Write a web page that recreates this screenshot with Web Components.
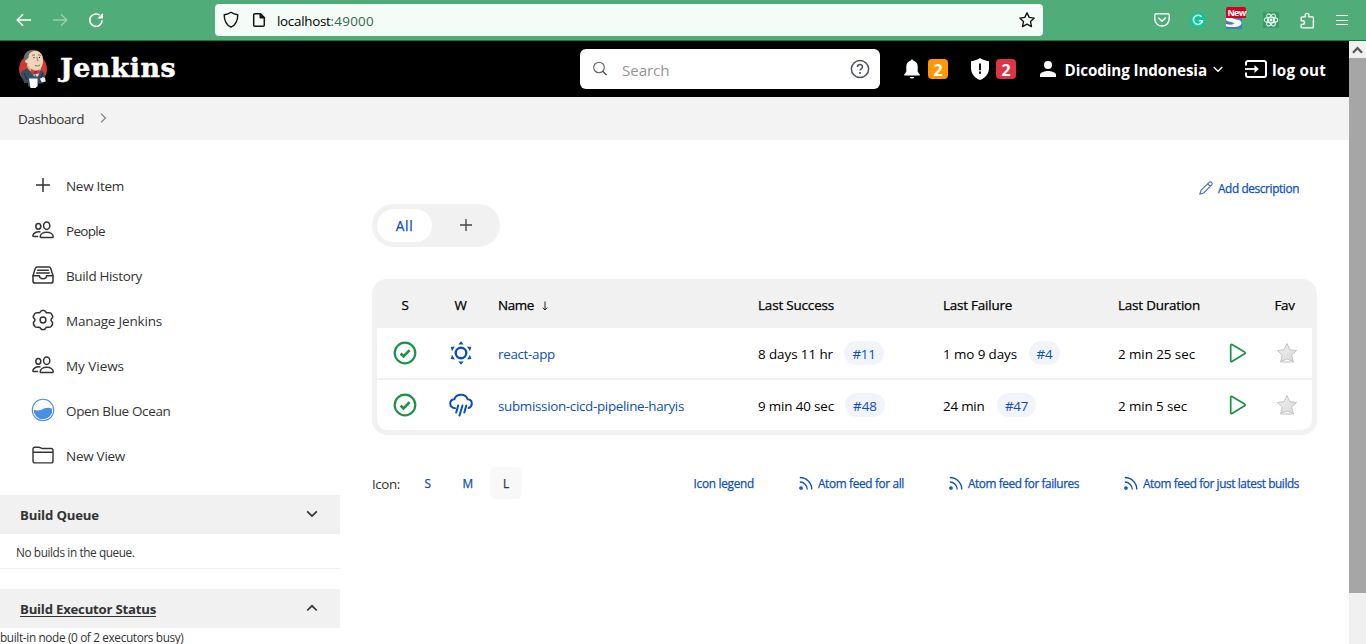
<!DOCTYPE html>
<html lang="en">
<head>
<meta charset="utf-8">
<title>Dashboard [Jenkins]</title>
<style>
html,body{margin:0;height:100%;overflow:hidden;background:#fff;font-family:"Open Sans","Noto Sans",sans-serif;color:#333}
</style>
</head>
<body>
<jenkins-window></jenkins-window>
<script>
const define = (name, html) => customElements.define(name, class extends HTMLElement {
  constructor() {
    super();
    const t = document.createElement('template');
    t.innerHTML = html;
    this.attachShadow({mode: 'open'}).append(t.content.cloneNode(true));
  }
});

/* name: [width, height, svg body]; the viewBox equals the drawn size */
const ICONS = {
  back: [16,14,'<path d="M15 7H1.5M7 1.2 1.2 7 7 12.8" fill="none" stroke="#fff" stroke-width="1.5"/>'],
  forward: [16,14,'<path d="M1 7h13.5M9 1.2 14.8 7 9 12.8" fill="none" stroke="#9bd0b3" stroke-width="1.3"/>'],
  reload: [16,16,'<path d="M14.1 8.2A6.2 6.2 0 1 1 11.6 3.2" fill="none" stroke="#fff" stroke-width="1.6"/><path d="M14.9 1v5.6H9.3z" fill="#fff"/>'],
  shield: [16,18,'<path d="M8 1.3C6 2.8 3.8 3.5 1.2 3.8c0 5.600 1.700 10 6.800 12.400 5.100-2.400 6.800-6.800 6.800-12.400C12.200 3.500 10 2.800 8 1.300z" fill="none" stroke="#15141a" stroke-width="1.4" stroke-linejoin="round"/>'],
  page: [14,16,'<path d="M3 1.700h5.500l3.800 3.800V13a1.300 1.300 0 0 1-1.300 1.300H3A1.300 1.300 0 0 1 1.700 13V3A1.300 1.300 0 0 1 3 1.700z" fill="none" stroke="#15141a" stroke-width="1.500"/><path d="M8 1.500V6h4.500z" fill="#15141a" stroke="#15141a"/>'],
  bookmark: [18,18,'<path d="m9 1.800 2.200 4.600 5 .7-3.650 3.500.9 5L9 13.200l-4.450 2.400.9-5L1.800 7.100l5-.7z" fill="none" stroke="#15141a" stroke-width="1.400" stroke-linejoin="round"/>'],
  pocket: [16,14,'<path d="M2.300.8h11.400c.8 0 1.500.6 1.500 1.500V6a7.200 7 0 0 1-14.400 0V2.300C.8 1.400 1.500.8 2.300.8z" fill="none" stroke="#fff" stroke-width="1.400"/><path d="m4.700 5 3.300 3.200L11.300 5" fill="none" stroke="#fff" stroke-width="1.500" stroke-linecap="round"/>'],
  grammarly: [16,16,'<circle cx="8" cy="8" r="7.800" fill="#15c39a"/><path d="M11.500 4.800A4.600 4.600 0 1 0 12.500 8.700H9" fill="none" stroke="#d9fff3" stroke-width="1.500"/><path d="m10.800 8.500 2.400-.2-.5 3z" fill="#d9fff3"/>'],
  swoosh: [16,11,'<path fill="#3d7fc1" d="M0 0h16v11H0z"/><path d="M0 0h6c2 2 9 1 9.500 4.500C15.500 8.500 10 10 0 8.500V6c4 1 8 .8 8-.5S2 4 0 2z" fill="#fff"/>'],
  react: [16,16,'<path fill="#3f976a" d="M0 0h16v16H0z"/><g fill="none" stroke="#e7fff2" stroke-width="1.100"><ellipse cx="8" cy="8" rx="6.800" ry="2.700"/><ellipse cx="8" cy="8" rx="6.800" ry="2.700" transform="rotate(60 8 8)"/><ellipse cx="8" cy="8" rx="6.800" ry="2.700" transform="rotate(120 8 8)"/></g><circle cx="8" cy="8" r="1.400" fill="#fff"/>'],
  puzzle: [16,17,'<path d="M2.200 6.300V5.900c0-.6.400-1 1-1h3V3.200a1.800 1.800 0 0 1 3.700 0v1.700h3.500c.6 0 1 .4 1 1v9c0 .6-.4 1-1 1H3.200c-.6 0-1-.4-1-1v-2.500h1.500a1.800 1.800 0 0 0 0-3.700H2.200z" fill="none" stroke="#fff" stroke-width="1.400" stroke-linejoin="round"/>'],
  menu: [14,12,'<path d="M1 1.500h12M1 6.500h12M1 10.500h12" stroke="#fff" stroke-width="1.200"/>'],
  jenkins: [30,40,'<ellipse cx="15" cy="20" rx="14" ry="14.500" fill="#d33833"/><path d="M2.500 25C4 21 8 20 11 19l10 2c4 0 6 3 5.500 7L26 33c-3 4-7 5-11 5-5 0-8-2-9.500-6z" fill="#335061"/><path d="M9 16c0 4 3 7 8 8 3 0 5-1 6-4l-1-6z" fill="#d6b58d"/><path d="M7 9C7 3 11 1 16 1.500c6 0 9 4 9 9 .5 6-2 10-6 10.500-6 1-11-5-12-12z" fill="#f0d6b7"/><path d="M6.800 13C4 7 8 1.500 13 1c2-.5 5-.5 7 .5-4 .3-7 1-8.500 3-1.300 1.600-.4 3.300-1.500 5-.8.500-1.500.5-1.700 1.500z" fill="#6d6b6d"/><path d="M8 10.500c-2 0-2 4 1.500 4" fill="#f0d6b7" stroke="#4d3a2b" stroke-width=".6"/><path d="M14 6.500c1-.8 2-.8 3 0M20 6.300c1-.6 2-.5 3 .2M19 8c-.5 2 2 3 .4 4.200M17 16.500c1.800.8 3.600.5 5-.4" stroke="#5d5148" stroke-width=".8" fill="none"/><circle cx="16" cy="8.600" r=".6"/><circle cx="21.500" cy="8.300" r=".6"/><path d="m13 19.800 4 2.200 4.500-1.200.5 4.500-4.500-1-4 1.400z" fill="#d33833"/><circle cx="17.600" cy="23" r="1.200" fill="#a01e1e"/><path d="m15 25.500 6-1-1 3h-4z" fill="#ddd"/><path d="M17.200 25.500v3" stroke="#335061" stroke-width="1.200"/><path d="M11 29.500h8.500v7.500l-2 2h-5z" fill="#fff"/><path d="M22 30c1-2 4-2.500 5-1l.8 3.500-4 .8z" fill="#eee"/><path d="M20 34.500h8V40h-8zM0 34h10v6H4z" fill="#000"/><path d="m6 24 3 7M25 24l-2 5" stroke="#1d2f3b" fill="none"/>'],
  search: [16,16,'<circle cx="7" cy="6.500" r="5.300" fill="none" stroke="#5b5f63" stroke-width="1.100"/><path d="m10.900 10.400 3.600 3.600" stroke="#333" stroke-width="1.100"/>'],
  help: [20,20,'<circle cx="10" cy="10" r="8.600" fill="none" stroke="#4d545d" stroke-width="1.500"/><path d="M7.500 8.100C7.500 4.800 12.500 4.800 12.500 7.900c0 1.800-2.500 2-2.500 3.600" fill="none" stroke="#4d545d" stroke-width="1.500"/><circle cx="10" cy="14" r="1.050" fill="#4d545d"/>'],
  bell: [16,20,'<path d="M8 .5c.8 0 1.300.5 1.400 1.200 2.800.6 4.300 2.800 4.300 5.800v5.300l1.900 2.500c.5.800.2 1.200-.5 1.200H.9c-.7 0-1-.4-.5-1.200l1.900-2.500V7.500c0-3 1.500-5.200 4.300-5.800C6.700 1 7.200.5 8 .5zM5.800 18h4.400a2.200 1.600 0 0 1-4.400 0z" fill="#fff"/>'],
  guard: [18,22,'<path d="M9 0c2.500 1.700 5.500 2.700 9 3.200V10c0 5.500-3.500 10-9 12-5.500-2-9-6.500-9-12V3.200C3.500 2.700 6.500 1.700 9 0z" fill="#fff"/><path d="M9 5.500v6.700M9 13.500v2.200" stroke="#111" stroke-width="2"/>'],
  user: [16,16,'<circle cx="8" cy="4" r="4" fill="#fff"/><path d="M0 16v-2c0-3 5.300-4 8-4s8 1 8 4v2z" fill="#fff"/>'],
  chevWhite: [10,7,'<path d="m.7 1 4.300 4.300L9.300 1" fill="none" stroke="#fff" stroke-width="1.300"/>'],
  logout: [22,18,'<path d="M1 5.500V3c0-1.200.8-2 2-2h16c1.200 0 2 .8 2 2v12c0 1.200-.8 2-2 2H3c-1.200 0-2-.8-2-2v-2.500" fill="none" stroke="#fff" stroke-width="2"/><path d="M0 9h11" stroke="#fff" stroke-width="1.800"/><path d="M9.500 5 13.800 9 9.500 13z" fill="#fff"/>'],
  crumb: [7,10,'<path d="m1.200.8 4.300 4.200-4.300 4.200" fill="none" stroke="#888" stroke-width="1.300"/>'],
  plus: [16,16,'<path d="M8 1v14M1 8h14" stroke="#333" stroke-width="1.500"/>'],
  people: [22,18,'<g fill="none" stroke="#333" stroke-width="1.500" stroke-linejoin="round"><ellipse cx="14.700" cy="4.700" rx="3.100" ry="3.700"/><ellipse cx="6.300" cy="5.300" rx="2.500" ry="2.900"/><path d="M8.200 15.800c0-2.600 2.800-4.600 6.500-4.600s6.500 2 6.500 4.600c0 .5-.3.800-.8.800H9c-.5 0-.8-.3-.8-.800zM8.500 10.900C5 10.200 1 11.800.8 14.700c0 .4.300.7.700.7h4.700"/></g>'],
  history: [22,18,'<g fill="none" stroke="#333" stroke-width="1.500" stroke-linejoin="round"><path d="M1 9.700 3.200 2.600C3.500 1.500 4.300 1 5.300 1h11.400c1 0 1.800.5 2.100 1.600L21 9.700v5.200c0 1.300-.9 2.100-2.100 2.100H3.100C1.900 17 1 16.200 1 14.900z"/><path d="M1 9.700h6.500c0 1.800 1.500 3 3.500 3s3.500-1.200 3.500-3H21M4.700 7h12.600M5.700 4.300h10.600" stroke-linecap="round"/></g>'],
  gear: [22,22,'<path d="M11 1.200C13 1.200 13.500 2.300 14.100 3.500 15.400 4.300 17.500 3 18.900 4.200 20.200 5.800 21 7.300 20.600 8.600 19.800 9.500 19 10.200 19 11s.8 1.500 1.600 2.400c.4 1.300-.4 2.800-1.700 4.400-1.400 1.200-3.500-.1-4.800.7-.6 1.200-1.100 2.300-3.100 2.300s-2.500-1.100-3.100-2.300c-1.300-.8-3.400.5-4.800-.7C1.800 16.200 1 14.700 1.400 13.400 2.200 12.500 3 11.800 3 11s-.8-1.500-1.600-2.400C1 7.300 1.800 5.800 3.100 4.200c1.400-1.200 3.500.1 4.800-.7C8.500 2.300 9 1.200 11 1.200z" fill="none" stroke="#333" stroke-width="1.500"/><circle cx="11" cy="11" r="2.900" fill="none" stroke="#333" stroke-width="1.500"/>'],
  ocean: [24,24,'<circle cx="12" cy="12" r="10.700" fill="#fff" stroke="#4a90e2" stroke-width="1.100"/><path d="M2.700 11.500C5 12.600 7.500 13 10.500 11.700 13.500 10.400 16 8.700 21.200 10.800A9.300 9.300 0 1 1 2.700 11.500z" fill="#4a90e2"/>'],
  folder: [22,18,'<g fill="none" stroke="#333" stroke-width="1.400"><path d="M1 15V3c0-1.200.7-1.800 1.800-1.800h4c1.600 0 2.200 1.300 3.700 1.300h8.700c1.200 0 1.800.7 1.800 1.800V15c0 1.200-.7 1.900-1.800 1.900H2.800C1.700 16.900 1 16.200 1 15zM1 6.300h20"/></g>'],
  down: [12,8,'<path d="m1.200 1.300 4.800 4.700 4.800-4.700" fill="none" stroke="#333" stroke-width="1.700"/>'],
  up: [12,8,'<path d="M1.200 6.500 6 1.800l4.800 4.700" fill="none" stroke="#333" stroke-width="1.700"/>'],
  pencil: [14,14,'<path d="M.8 13.200 2 9.300l7.800-7.700c1-1 2-.9 2.800-.2.800.8.8 1.900-.2 2.800L4.700 12z M8.700 2.700l2.600 2.600" fill="none" stroke="#3d6fc4" stroke-width="1.100" stroke-linejoin="round"/>'],
  tabplus: [14,14,'<path d="M7 1v12M1 7h12" stroke="#444" stroke-width="1.300"/>'],
  ok: [24,24,'<circle cx="12" cy="12" r="10.300" fill="none" stroke="#1e9147" stroke-width="2.200"/><path d="m7.600 12.500 3 2.900 6-6.300" fill="none" stroke="#1e9147" stroke-width="2.700"/>'],
  sun: [24,24,'<circle cx="12" cy="12" r="5.300" fill="none" stroke="#0b4fba" stroke-width="2.400"/><path d="m12 .3 2.700 3.300H9.300zM12 23.700l2.700-3.300H9.300zM22.300 6.100l-1.300 4.100-2.900-4.700zM1.700 6.100 3 10.200l2.900-4.700zM22.300 17.900 21 13.800l-2.900 4.700zM1.700 17.900 3 13.800l2.900 4.700z" fill="#0b4fba"/>'],
  rain: [24,24,'<path d="M6 15.300C2.800 14.700 1.200 12.800 1.200 10.600c0-2.600 1.900-4.300 4.200-4.400C6.300 3.500 8.800 1.800 12 1.800s5.700 1.700 6.600 4.400c2.300.1 4.200 1.800 4.200 4.400 0 2.200-1.300 3.900-3.300 4.400" fill="none" stroke="#0b4fba" stroke-width="2" stroke-linecap="round"/><path d="M9.200 12.500 7.200 19.500M13.500 12.500l-3 10M17.300 12.500 15.300 19.500" stroke="#0b4fba" stroke-width="2" stroke-linecap="round"/>'],
  play: [18,20,'<path d="M1.700 2.300c0-.8.600-1.200 1.300-.8l12.600 7.600c.7.400.7 1.200 0 1.600L3 18.500c-.7.400-1.300 0-1.300-.8z" fill="none" stroke="#1e9147" stroke-width="1.700"/>'],
  star: [22,22,'<defs><linearGradient id="g" x2="1" y2="1"><stop stop-color="#f2f2f2"/><stop offset="1" stop-color="#d8d8d8"/></linearGradient></defs><ellipse cx="11" cy="20" rx="7.500" ry="1" fill="#ddd"/><path d="m11 1.500 2.900 6.200 6.700.8-5 4.500 1.800 6.600-6.400-2.600-6.400 2.600L6.400 13l-5-4.500 6.700-.8z" fill="url(#g)" stroke="#b8b8b8" stroke-width=".8"/>'],
  feed: [14,14,'<g fill="none" stroke="#0b4fba" stroke-width="1.300"><path d="M.8 1.500A12 12 0 0 1 12.800 13.500M.8 6A7.500 7.500 0 0 1 8.300 13.500"/><circle cx="2" cy="12" r="1.200" fill="#5a87d0"/></g>'],
  sorted: [8,10,'<path d="M4 .5v8M1.800 6.700 4 9l2.200-2.300" fill="none" stroke="#222" stroke-width="1"/>'],
  scrollup: [11,8,'<path d="M1 6.800 5.500 2 10 6.800" fill="none" stroke="#555" stroke-width="2.200"/>']
};
customElements.define('ui-icon', class extends HTMLElement {
  connectedCallback() {
    if (this.shadowRoot) return;
    const [w, h, body] = ICONS[this.getAttribute('name')];
    this.attachShadow({mode: 'open'}).innerHTML =
      `<style>:host{display:block;flex:none;width:${w}px;height:${h}px}svg{display:block}</style>
       <svg width="${w}" height="${h}" viewBox="0 0 ${w} ${h}">${body}</svg>`;
  }
});

define('browser-bar', `
<style>
:host{display:flex;align-items:center;height:40px;background:#50ad7a;border-bottom:1px solid #0e7b41;padding:0 16px 0 16px;box-sizing:content-box}
nav{display:flex;align-items:center;gap:20px;width:199px}
.url{display:flex;align-items:center;width:828px;height:32px;padding:0 7px 0 8px;border-radius:4px;background:#f3fcf7;margin-right:111px;box-sizing:border-box}
.url ui-text{margin:2px 0 0 11px;color:#000;flex:none}
.url .port{color:#34684b;margin-left:0}
.url .page{margin-left:13px}
.url .mark{margin-left:auto}
.tools{display:flex;align-items:center;justify-content:space-between;width:195px}
.ext{display:flex;flex-direction:column;width:20px;height:22px;margin:-4px 0 0 0}
.new{width:20px;height:11px;border-radius:2px 2px 0 0;background:#d70022;color:#fff}
.new ui-text{margin-left:1px}
</style>
<nav><ui-icon name="back"></ui-icon><ui-icon name="forward"></ui-icon><ui-icon name="reload"></ui-icon></nav>
<div class="url"><ui-icon name="shield"></ui-icon><ui-icon name="page" class="page"></ui-icon><ui-text s="13.4" w="53.500">localhost</ui-text><ui-text class="port" s="13.4" w="43.500">:49000</ui-text><ui-icon name="bookmark" class="mark"></ui-icon></div>
<div class="tools"><ui-icon name="pocket"></ui-icon><ui-icon name="grammarly"></ui-icon>
<div class="ext"><div class="new"><ui-text s="9" w="18.500" h="11" b>New</ui-text></div><ui-icon name="swoosh"></ui-icon></div>
<ui-icon name="react" style="margin-left:-4px"></ui-icon><ui-icon name="puzzle"></ui-icon><ui-icon name="menu"></ui-icon></div>`);

define('count-badge', `
<style>:host{display:flex;flex:none;align-items:center;justify-content:center;box-sizing:border-box;width:20px;height:20px;border-radius:4px;color:#fff;font:700 16px/20px "Open Sans",sans-serif;padding-top:2px}</style><slot></slot>`);

define('site-header', `
<style>
:host{display:flex;align-items:center;height:56px;background:#000;color:#fff;padding:0 0 0 18px}
.brand{display:flex;flex:none;align-items:center;width:562px;gap:12px}
.brand ui-text{font-family:"DejaVu Serif",serif;margin-top:-3px;-webkit-text-stroke:.5px #fff}
.search{display:flex;flex:none;align-items:center;box-sizing:border-box;width:300px;height:40px;border-radius:6px;background:#fff;color:#959595;padding:0 10px 0 12px}
.search ui-text{margin:2px auto 0 14px}
count-badge{margin-left:8px}
.bell{margin-left:24px}.guard{margin-left:23px}.user{margin-left:24px}
.name{margin:2px 6px 0 8.500px}.out{margin:2px 0 0 5px}.logout{margin-left:22px}
</style>
<div class="brand"><ui-icon name="jenkins"></ui-icon><ui-text s="26.800" w="116" b h="36">Jenkins</ui-text></div>
<div class="search"><ui-icon name="search"></ui-icon><ui-text s="15.200" w="47.500" h="22">Search</ui-text><ui-icon name="help"></ui-icon></div>
<ui-icon class="bell" name="bell"></ui-icon><count-badge style="background:#ff9800">2</count-badge>
<ui-icon class="guard" name="guard"></ui-icon><count-badge style="background:#dc3545;margin-left:7px">2</count-badge>
<ui-icon class="user" name="user"></ui-icon><ui-text class="name" s="15.200" w="142.500" b h="22">Dicoding Indonesia</ui-text><ui-icon name="chevWhite"></ui-icon>
<ui-icon class="logout" name="logout"></ui-icon><ui-text class="out" s="15.200" w="54" b h="22">log out</ui-text>`);

define('crumb-bar', `
<style>:host{display:flex;align-items:center;gap:16px;height:43px;background:#f3f3f3;padding-left:18px}
ui-icon{margin-top:-2px}</style>
<ui-text s="13.500" w="66">Dashboard</ui-text><ui-icon name="crumb"></ui-icon>`);

customElements.define('side-task', class extends HTMLElement {
  connectedCallback() {
    if (this.shadowRoot) return;
    this.attachShadow({mode: 'open'}).innerHTML = `
<style>:host{display:grid;grid-template-columns:24px auto;column-gap:11px;align-items:center;height:45px;padding-left:31px}
ui-icon{justify-self:center}ui-text{margin-top:2px;justify-self:start}</style>
<ui-icon name="${this.getAttribute('icon')}"></ui-icon><ui-text s="13.500" w="${this.getAttribute('w')}">${this.textContent}</ui-text>`;
  }
});

define('side-pane', `
<style>
:host{display:block;width:340px}
header{display:flex;align-items:center;justify-content:space-between;height:39px;background:#f1f1f1;padding:0 22px 0 20px}
::slotted(ui-icon){margin-top:-2px}
</style>
<header><slot name="title"></slot><slot name="toggle"></slot></header><slot></slot>`);

define('side-panel', `
<style>
:host{display:block;width:340px;flex:none;padding-top:22px}
.tasks{margin-bottom:18px}
.empty{height:34px;border-bottom:1px solid #f0f0f0;padding-left:16px;display:flex;align-items:center;margin-bottom:20px}
.empty ui-text{margin-top:1px}
.node{height:18px}
</style>
<div class="tasks">
<side-task icon="plus" w="58">New Item</side-task>
<side-task icon="people" w="39">People</side-task>
<side-task icon="history" w="76">Build History</side-task>
<side-task icon="gear" w="96">Manage Jenkins</side-task>
<side-task icon="people" w="58">My Views</side-task>
<side-task icon="ocean" w="104.500">Open Blue Ocean</side-task>
<side-task icon="folder" w="59">New View</side-task>
</div>
<side-pane><ui-text slot="title" s="13.200" w="79" b>Build Queue</ui-text><ui-icon slot="toggle" name="down"></ui-icon>
<div class="empty"><ui-text s="11.800" w="118.500">No builds in the queue.</ui-text></div></side-pane>
<side-pane><ui-text slot="title" s="13.200" w="136" b u>Build Executor Status</ui-text><ui-icon slot="toggle" name="up"></ui-icon>
<div class="node"><ui-text s="11.800" w="183.500" h="18">built-in node (0 of 2 executors busy)</ui-text></div></side-pane>`);

define('view-tabs', `
<style>:host{display:flex;align-items:center;box-sizing:border-box;width:128px;height:43px;border-radius:22px;background:#f1f1f1;padding:5px}
.on{display:flex;align-items:center;justify-content:center;width:55px;height:33px;border-radius:17px;background:#fff;color:#0b4fba}
.on ui-text{margin-top:1px}
.add{margin-left:27px;margin-top:-1px}</style>
<div class="on"><ui-text s="13.800" w="17.500" m>All</ui-text></div><ui-icon class="add" name="tabplus"></ui-icon>`);

define('build-link', `
<style>:host{display:flex;align-items:center;justify-content:center;height:24px;border-radius:12px;background:#f1f5fb;color:#0b4fba}</style><slot></slot>`);

define('job-table', `
<style>
:host{display:block;box-sizing:border-box;width:945px;height:156px;border:5px solid #f1f1f1;border-radius:15px;background:#fff;color:#000}
.r{display:grid;grid-template-columns:56px 56px 260px 185px 175px 111px 36px 56px;align-items:center;height:50px}
.h{height:44px;background:#f1f1f1}
.r+.r+.r{border-top:2px solid #f1f1f1}
.c{display:flex;align-items:center;padding-left:9px}
.m{display:flex;justify-content:center}
.c ui-text,.m ui-text{margin-top:2px}
.h .c ui-text,.h .m ui-text{margin:0 0 2px}.h .m ui-text{margin-left:1px}.h ui-icon{margin:0 0 0 7px}
.l{color:#0b4fba}
</style>
<div class="r h"><div class="m"><ui-text s="13.400" w="8" m>S</ui-text></div><div class="m"><ui-text s="13.400" w="14" m>W</ui-text></div>
<div class="c"><ui-text s="13.400" w="36" m>Name</ui-text><ui-icon name="sorted"></ui-icon></div>
<div class="c"><ui-text s="13.400" w="76" m>Last Success</ui-text></div><div class="c"><ui-text s="13.400" w="69" m>Last Failure</ui-text></div>
<div class="c"><ui-text s="13.400" w="82" m>Last Duration</ui-text></div><div></div><div class="m"><ui-text s="13.400" w="20" m>Fav</ui-text></div></div>
<div class="r"><div class="m"><ui-icon name="ok"></ui-icon></div><div class="m"><ui-icon name="sun"></ui-icon></div>
<div class="c l"><ui-text s="13.400" w="57">react-app</ui-text></div>
<div class="c"><ui-text s="13.400" w="75">8 days 11 hr</ui-text><build-link style="width:40px;margin-left:11px"><ui-text s="13.400" w="23">#11</ui-text></build-link></div>
<div class="c"><ui-text s="13.400" w="74">1 mo 9 days</ui-text><build-link style="width:31px;margin-left:12px"><ui-text s="13.400" w="16">#4</ui-text></build-link></div>
<div class="c"><ui-text s="13.400" w="77">2 min 25 sec</ui-text></div><div class="m"><ui-icon name="play"></ui-icon></div><div class="m"><ui-icon name="star" style="margin-left:5px"></ui-icon></div></div>
<div class="r"><div class="m"><ui-icon name="ok"></ui-icon></div><div class="m"><ui-icon name="rain"></ui-icon></div>
<div class="c l"><ui-text s="13.400" w="186">submission-cicd-pipeline-haryis</ui-text></div>
<div class="c"><ui-text s="13.400" w="76">9 min 40 sec</ui-text><build-link style="width:40px;margin-left:11px"><ui-text s="13.400" w="24">#48</ui-text></build-link></div>
<div class="c"><ui-text s="13.400" w="41.500">24 min</ui-text><build-link style="width:39px;margin-left:12.500px"><ui-text s="13.400" w="23">#47</ui-text></build-link></div>
<div class="c"><ui-text s="13.400" w="69">2 min 5 sec</ui-text></div><div class="m"><ui-icon name="play"></ui-icon></div><div class="m"><ui-icon name="star" style="margin-left:5px"></ui-icon></div></div>`);

define('table-footer', `
<style>
:host{display:flex;align-items:center;width:927px;height:32px;color:#0b4fba}
.dark{color:#333}
.size{display:flex;align-items:center;justify-content:center;width:32px;height:32px;border-radius:5px;margin-right:8px}
.on{background:#f8f8f8;color:#333;margin:0 0 0 -2px}
.first{margin-left:12px}
.legend{margin-left:auto}
ui-text.dark{margin-top:1px}
ui-text.legend{margin-right:45px}
ui-icon{margin-right:5px}
.gap{margin-right:45px}
</style>
<ui-text class="dark" s="13.400" w="28">Icon:</ui-text>
<div class="size first"><ui-text s="11.800" w="7" m>S</ui-text></div><div class="size"><ui-text s="11.800" w="11" m>M</ui-text></div><div class="size on"><ui-text s="11.800" w="6" m>L</ui-text></div>
<ui-text class="legend" s="11.800" w="60.500" m>Icon legend</ui-text>
<ui-icon name="feed"></ui-icon><ui-text class="gap" s="11.800" w="86" m>Atom feed for all</ui-text>
<ui-icon name="feed"></ui-icon><ui-text class="gap" s="11.800" w="111" m>Atom feed for failures</ui-text>
<ui-icon name="feed"></ui-icon><ui-text s="11.800" w="156" m>Atom feed for just latest builds</ui-text>`);

define('main-panel', `
<style>
:host{display:block;padding:36px 0 0 32px;box-sizing:border-box;width:1009px}
.desc{display:flex;align-items:center;justify-content:flex-end;gap:5px;width:927px;height:24px;color:#0b4fba;margin-bottom:4px}
job-table{margin:32px 0}
</style>
<div class="desc"><ui-icon name="pencil"></ui-icon><ui-text s="11.800" w="81" m>Add description</ui-text></div>
<view-tabs></view-tabs><job-table></job-table><table-footer></table-footer>`);

define('scroll-bar', `
<style>:host{display:flex;flex-direction:column;width:17px;background:#f0f0f0}
.b{height:17px;display:flex;align-items:center;justify-content:center}.t{height:535px;background:#a6a6a6}</style>
<div class="b"><ui-icon name="scrollup"></ui-icon></div><div class="t"></div>`);

define('jenkins-window', `
<style>
:host{display:block;width:1366px;height:644px;overflow:hidden}
.view{display:grid;grid-template-columns:1349px 17px;height:603px}
.page{overflow:hidden;height:603px}
.body{display:flex}
</style>
<browser-bar></browser-bar>
<div class="view"><div class="page"><site-header></site-header><crumb-bar></crumb-bar><div class="body"><side-panel></side-panel><main-panel></main-panel></div></div><scroll-bar></scroll-bar></div>`);

/* One line of text; w is its set width, reached by even tracking */
customElements.define('ui-text', class extends HTMLElement {
  connectedCallback() {
    if (this.shadowRoot) return;
    const a = n => this.getAttribute(n);
    const w = parseFloat(a('w'));
    const weight = this.hasAttribute('b') ? 700 : 400;
    const medium = this.hasAttribute('m') ? '-webkit-text-stroke:.25px currentColor;' : '';
    const line = this.hasAttribute('u') ? 'text-decoration:underline;text-underline-offset:1.500px;' : '';
    this.attachShadow({mode: 'open'}).innerHTML =
      `<style>:host{display:block;flex:none;width:${w}px;white-space:nowrap;font-size:${a('s')}px;font-weight:${weight};line-height:${a('h') || 20}px}span{display:inline-block;${medium}${line}}</style><span><slot></slot></span>`;
    const span = this.shadowRoot.querySelector('span');
    const natural = span.getBoundingClientRect().width;
    span.style.letterSpacing = ((w - natural) / this.textContent.length).toFixed(3) + 'px';
  }
});
</script>
</body>
</html>
